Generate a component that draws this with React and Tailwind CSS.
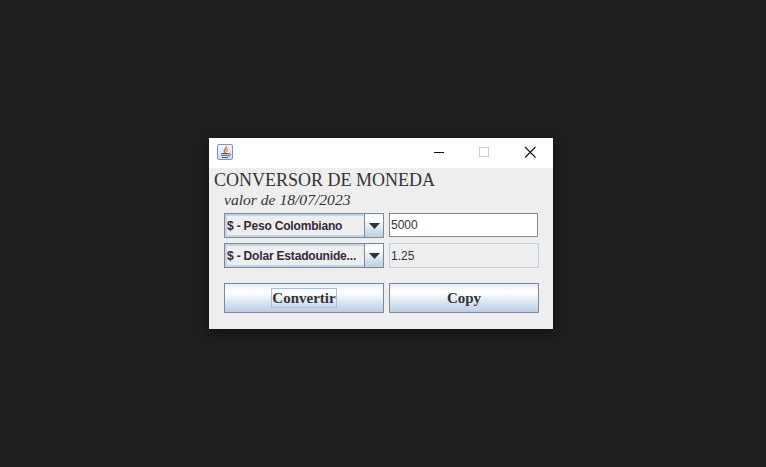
const BTN_BG = 'bg-[linear-gradient(to_bottom,#e8eef5_0%,#ffffff_30%,#dde8f3_62%,#b9cde3_100%)]'

function Combo({ label }) {
  return (
    <div className="flex h-[25px] w-[160px] border border-[#7a8a99] bg-[#eeeeee]">
      <div className="flex flex-1 items-center border-2 border-r-0 border-[#c3d5e8] font-['Liberation_Sans',sans-serif] text-[12px] font-bold leading-none tracking-[-0.18px] text-[#33293f]">
        {label}
      </div>
      <div className="flex w-[19px] items-center justify-center border-l border-[#7a8a99] bg-[linear-gradient(to_bottom,#f0f4f8_0%,#ffffff_25%,#dce7f2_60%,#bbcfe4_100%)]">
        <svg width="11" height="6" viewBox="0 0 11 6"><path d="M0 0h11L5.500 6z" fill="#333333" /></svg>
      </div>
    </div>
  )
}

function JavaIcon() {
  return (
    <div className="mb-[2px] flex h-[16px] w-[16px] items-center justify-center rounded-[2px] border border-[#7f97b5] bg-[linear-gradient(to_bottom,#f6f8fb,#cfdcec)]">
      <svg width="13" height="13" viewBox="0 0 13 13" fill="none">
        <path d="M7 0.500C8.500 2.500 4.500 3 5.500 5.500c.3.700.8 1 1 1.500" stroke="#e0691a" strokeWidth="1.500" />
        <path d="M9 2.500C7.800 3.500 7.500 4.500 8 6" stroke="#e0691a" strokeWidth="1" />
        <path d="M2.500 7.500h7M2 9.300h8M3 11.500h6" stroke="#3f5a78" strokeWidth="1.100" />
        <path d="M10 7.500c2.200 0 2 2.300-.5 2.500" stroke="#3f5a78" strokeWidth="0.900" />
      </svg>
    </div>
  )
}

function Button({ children, focused, width }) {
  return (
    <div className={`flex h-[30px] items-center justify-center border border-[#7a8a99] ${width} ${BTN_BG} font-['Liberation_Serif',serif] text-[15px] font-bold leading-none text-[#333333]`}>
      {focused ? (
        <span className="flex h-[20px] items-center border border-[#a9bfd6]">{children}</span>
      ) : children}
    </div>
  )
}

export default function App() {
  return (
    <div className="h-[467px] w-[766px] overflow-hidden bg-[#1e1e1e] pl-[209px] pt-[138px]">
      <div className="h-[191px] w-[344px] bg-[#eeeeee] shadow-[0_4px_14px_rgba(0,0,0,0.45)]">
        {/* barra de titulo */}
        <div className="flex h-[30px] items-center bg-white pl-[8px] pr-[10px]">
          <JavaIcon />
          <div className="ml-auto flex items-center">
            <svg width="46" height="30" viewBox="0 0 46 30"><path d="M6 14.500h10" stroke="#111111" strokeWidth="1" /></svg>
            <svg width="46" height="30" viewBox="0 0 46 30"><rect x="5.500" y="9.500" width="9" height="9" fill="none" stroke="#cccccc" /></svg>
            <svg width="23" height="30" viewBox="0 0 23 30"><path d="M5 9l10.500 10.500M15.500 9L5 19.500" stroke="#111111" strokeWidth="1.100" /></svg>
          </div>
        </div>

        <div className="pl-[5px] font-['Liberation_Serif',serif] text-[#333333]">
          <div className="pt-[2px] text-[18px] leading-[21px]">CONVERSOR DE MONEDA</div>
          <div className="pl-[10px] text-[15.6px] italic leading-[18px]">valor de 18/07/2023</div>
        </div>

        <div className="flex flex-col pl-[15px] pt-[4px]">
          <div className="flex gap-[5px]">
            <Combo label="$ - Peso Colombiano" />
            <div className="flex h-[24px] w-[149px] items-center border border-[#7a8a99] bg-white pl-[1px] font-['Liberation_Sans',sans-serif] text-[12px] leading-none text-[#333333]">5000</div>
          </div>
          <div className="mt-[5px] flex gap-[5px]">
            <Combo label="$ - Dolar Estadounide..." />
            <div className="flex h-[25px] w-[150px] items-center border border-[#b8cfe5] bg-[#eeeeee] pl-[1px] font-['Liberation_Sans',sans-serif] text-[12px] leading-none text-[#333333]">1.25</div>
          </div>
          <div className="mt-[15px] flex gap-[5px]">
            <Button focused width="w-[160px]">Convertir</Button>
            <Button width="w-[150px]">Copy</Button>
          </div>
        </div>
      </div>
    </div>
  )
}
